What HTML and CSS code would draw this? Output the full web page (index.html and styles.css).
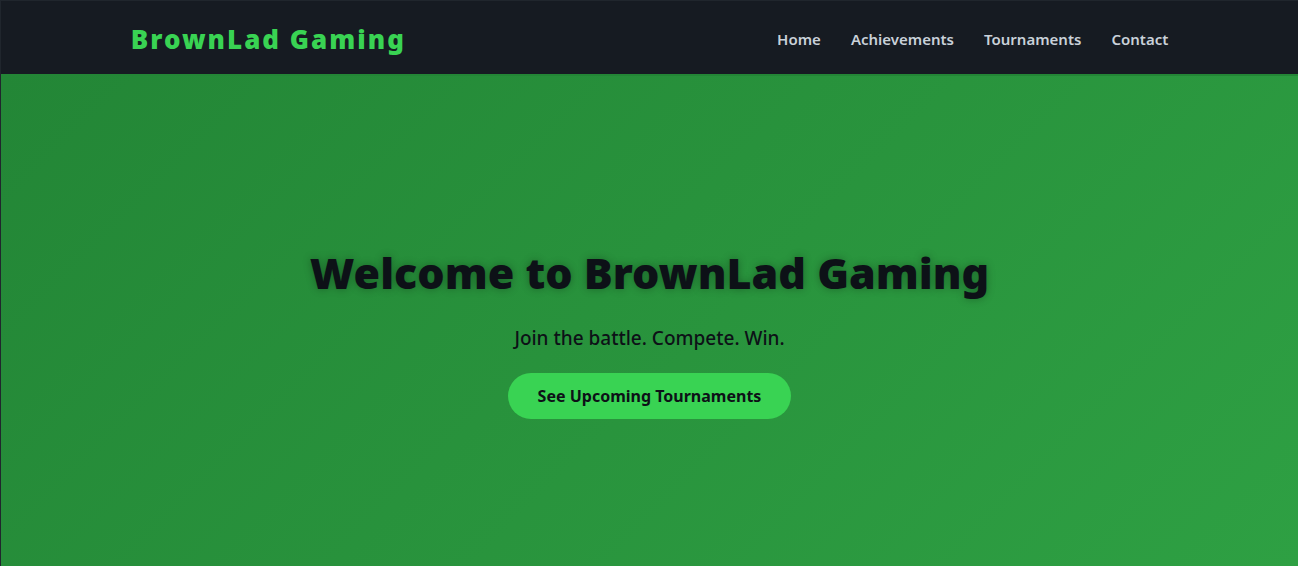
FILE: index.html
```html
<!DOCTYPE html>
<html lang="en">
<head>
<meta charset="utf-8">
<meta name="viewport" content="width=device-width, initial-scale=1">
<title>BrownLad Gaming</title>
<link rel="stylesheet" href="styles.css">
</head>
<body>
<header class="site-header">
  <div class="header-inner">
    <div class="logo">BrownLad Gaming</div>
    <nav class="site-nav">
      <a href="#home">Home</a>
      <a href="#achievements">Achievements</a>
      <a href="#tournaments">Tournaments</a>
      <a href="#contact">Contact</a>
    </nav>
  </div>
</header>
<main class="hero" id="home">
  <h1 class="hero-title">Welcome to BrownLad Gaming</h1>
  <p class="hero-text">Join the battle. Compete. Win.</p>
  <a class="hero-button" href="#tournaments">See Upcoming Tournaments</a>
</main>
</body>
</html>
```

FILE: styles.css
```css
* {
  box-sizing: border-box;
}

body {
  margin: 0;
  min-height: 100vh;
  display: flex;
  flex-direction: column;
  border-left: 1px solid #20262d;
  border-top: 1px solid #20262d;
  background: #0d1117;
  font-family: "Noto Sans", "Open Sans", sans-serif;
}

.site-header {
  background: #161b22;
  border-bottom: 2px solid #238636;
}

.header-inner {
  width: 80%;
  max-width: 1200px;
  margin: 0 auto;
  padding: 17px 0 14px;
  display: flex;
  align-items: center;
  justify-content: space-between;
}

.logo {
  color: #39d353;
  font-size: 26px;
  line-height: 42px;
  font-weight: 900;
  letter-spacing: 2px;
}

.site-nav {
  display: flex;
  gap: 30px;
}

.site-nav a {
  color: #c9d1d9;
  font-size: 15px;
  line-height: 24px;
  font-weight: 600;
  text-decoration: none;
}

.hero {
  flex: 1;
  display: flex;
  flex-direction: column;
  align-items: center;
  justify-content: center;
  padding: 52px 16px 32px;
  background: linear-gradient(135deg, #238636, #2ea043);
  color: #0d1117;
  text-align: center;
}

.hero-title {
  margin: 0 0 20px;
  font-size: 43px;
  line-height: 60px;
  font-weight: 900;
  text-shadow: 0 0 8px rgba(0, 0, 0, 0.3);
}

.hero-text {
  margin: 0 0 20px;
  font-size: 19px;
  line-height: 30px;
  font-weight: 500;
}

.hero-button {
  padding: 11px 30px;
  border-radius: 30px;
  background: #39d353;
  color: #0d1117;
  font-size: 16px;
  line-height: 24px;
  font-weight: 700;
  text-decoration: none;
}
```
